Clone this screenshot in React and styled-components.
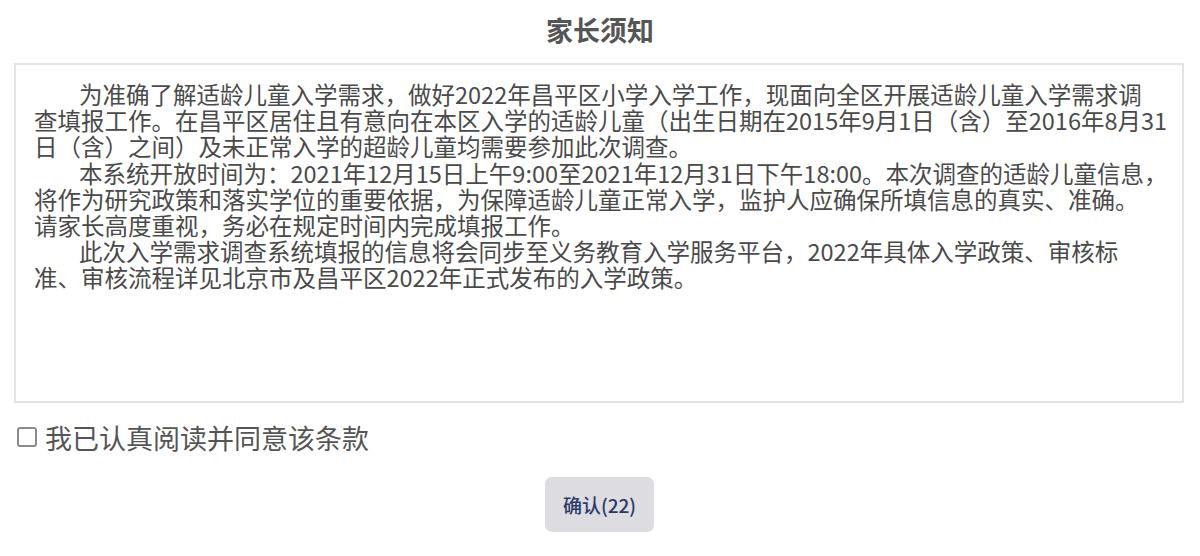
import React, { useState, useEffect } from 'react';
import styled, { createGlobalStyle } from 'styled-components';

const GlobalStyle = createGlobalStyle`
  html, body {
    margin: 0;
    padding: 0;
    background: #fff;
    font-family: "Noto Sans CJK SC", "Liberation Sans", sans-serif;
  }
`;

const Page = styled.div`
  width: 1200px;
  display: flex;
  flex-direction: column;
`;

const Title = styled.h1`
  margin: 0;
  padding-top: 14px;
  height: 63px;
  box-sizing: border-box;
  text-align: center;
  font-size: 27px;
  line-height: 32px;
  font-weight: 700;
  color: #555;
`;

const NoticeBox = styled.div`
  margin: 0 16px 0 14px;
  height: 340px;
  box-sizing: border-box;
  border: 2px solid #e3e3e3;
  padding: 16px 20px 0 18px;
  color: #4a4a4a;
  font-size: 23.5px;
  line-height: 26.2px;
`;

const Para = styled.div`
  display: flex;
  flex-direction: column;
`;

// lines are kept as in the original notice so the wrap points match
const Line = styled.span`
  display: block;
  white-space: nowrap;
  padding-left: ${({ indent }) => (indent ? '45px' : '0')};
`;

const AgreeRow = styled.label`
  display: flex;
  align-items: center;
  gap: 8px;
  margin: 19px 0 0 17px;
  height: 30px;
  font-size: 27px;
  color: #555;
  cursor: pointer;
`;

const Check = styled.span`
  width: 16px;
  height: 16px;
  border: 2px solid ${({ checked }) => (checked ? '#2c3e6b' : '#8a8a8a')};
  border-radius: 3px;
  background: ${({ checked }) => (checked ? '#2c3e6b' : '#fff')};
  flex-shrink: 0;
`;

const Actions = styled.div`
  display: flex;
  justify-content: center;
  margin-top: 25px;
  padding-right: 1px;
`;

const ConfirmButton = styled.button`
  width: 109px;
  height: 55px;
  border: none;
  border-radius: 7px;
  background: #dcdce1;
  color: #2c3a66;
  font-family: "Noto Sans CJK SC", "Liberation Sans", sans-serif;
  font-size: 19px;
  font-weight: 500;
  cursor: pointer;
`;

const paragraphs = [
  [
    '为准确了解适龄儿童入学需求，做好2022年昌平区小学入学工作，现面向全区开展适龄儿童入学需求调',
    '查填报工作。在昌平区居住且有意向在本区入学的适龄儿童（出生日期在2015年9月1日（含）至2016年8月31',
    '日（含）之间）及未正常入学的超龄儿童均需要参加此次调查。',
  ],
  [
    '本系统开放时间为：2021年12月15日上午9:00至2021年12月31日下午18:00。本次调查的适龄儿童信息，',
    '将作为研究政策和落实学位的重要依据，为保障适龄儿童正常入学，监护人应确保所填信息的真实、准确。',
    '请家长高度重视，务必在规定时间内完成填报工作。',
  ],
  [
    '此次入学需求调查系统填报的信息将会同步至义务教育入学服务平台，2022年具体入学政策、审核标',
    '准、审核流程详见北京市及昌平区2022年正式发布的入学政策。',
  ],
];

const App = () => {
  const [agreed, setAgreed] = useState(false);
  const [count, setCount] = useState(22);

  // countdown is frozen at 22 for the snapshot
  useEffect(() => {
    setCount(22);
  }, []);

  return (
    <>
      <GlobalStyle />
      <Page>
        <Title>家长须知</Title>
        <NoticeBox>
          {paragraphs.map((lines, i) => (
            <Para key={i}>
              {lines.map((line, j) => (
                <Line key={j} indent={j === 0}>{line}</Line>
              ))}
            </Para>
          ))}
        </NoticeBox>
        <AgreeRow onClick={() => setAgreed(!agreed)}>
          <Check checked={agreed} />
          我已认真阅读并同意该条款
        </AgreeRow>
        <Actions>
          <ConfirmButton>确认({count})</ConfirmButton>
        </Actions>
      </Page>
    </>
  );
};

export default App;
